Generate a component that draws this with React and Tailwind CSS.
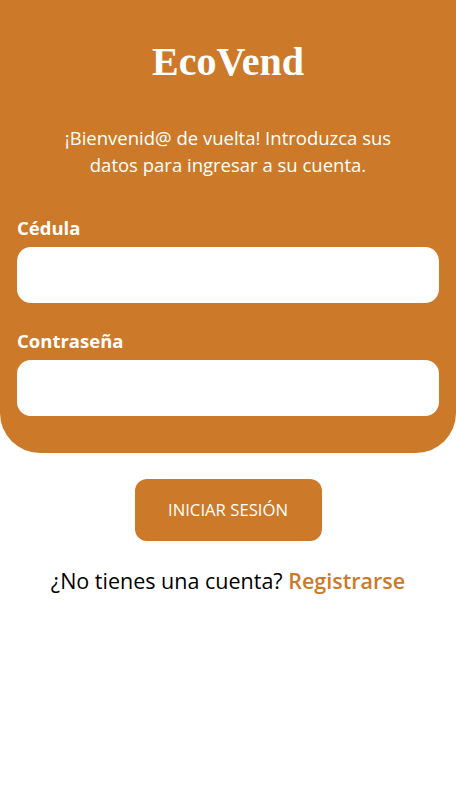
import React, { useState } from 'react';

const App = () => {
  const [cedula, setCedula] = useState('');
  const [password, setPassword] = useState('');

  return (
    <div className="min-h-screen bg-white font-['Open_Sans',sans-serif]">
      {/* Orange header panel */}
      <div className="bg-[#cc7a29] rounded-b-[40px] px-[17px] pt-[40px] pb-[37px]">
        <h1 className="text-center text-white font-bold text-[40px] leading-[44px] font-['Liberation_Serif',serif]">
          EcoVend
        </h1>
        <p className="mt-[40px] text-center text-white text-[18.5px] leading-[27px]">
          ¡Bienvenid@ de vuelta! Introduzca sus
          <br />
          datos para ingresar a su cuenta.
        </p>

        <div className="mt-[38px]">
          <label className="block text-white font-bold text-[18.5px] leading-[24px]">Cédula</label>
          <input
            type="text"
            value={cedula}
            onChange={(e) => setCedula(e.target.value)}
            className="mt-[7px] w-full h-[56px] bg-white rounded-[14px] px-4 outline-none"
          />
        </div>

        <div className="mt-[26px]">
          <label className="block text-white font-bold text-[18.5px] leading-[24px]">Contraseña</label>
          <input
            type="password"
            value={password}
            onChange={(e) => setPassword(e.target.value)}
            className="mt-[7px] w-full h-[56px] bg-white rounded-[14px] px-4 outline-none"
          />
        </div>
      </div>

      {/* Actions */}
      <div className="flex flex-col items-center">
        <button className="mt-[26px] w-[187px] h-[62px] bg-[#cc7a29] rounded-[12px] text-white text-[16.7px]">
          INICIAR SESIÓN
        </button>
        <p className="mt-[26px] text-[21.5px] leading-[28px] text-black">
          ¿No tienes una cuenta?{' '}
          <a href="#" className="font-semibold text-[#cc7a29]">Registrarse</a>
        </p>
      </div>
    </div>
  );
};

export default App;
